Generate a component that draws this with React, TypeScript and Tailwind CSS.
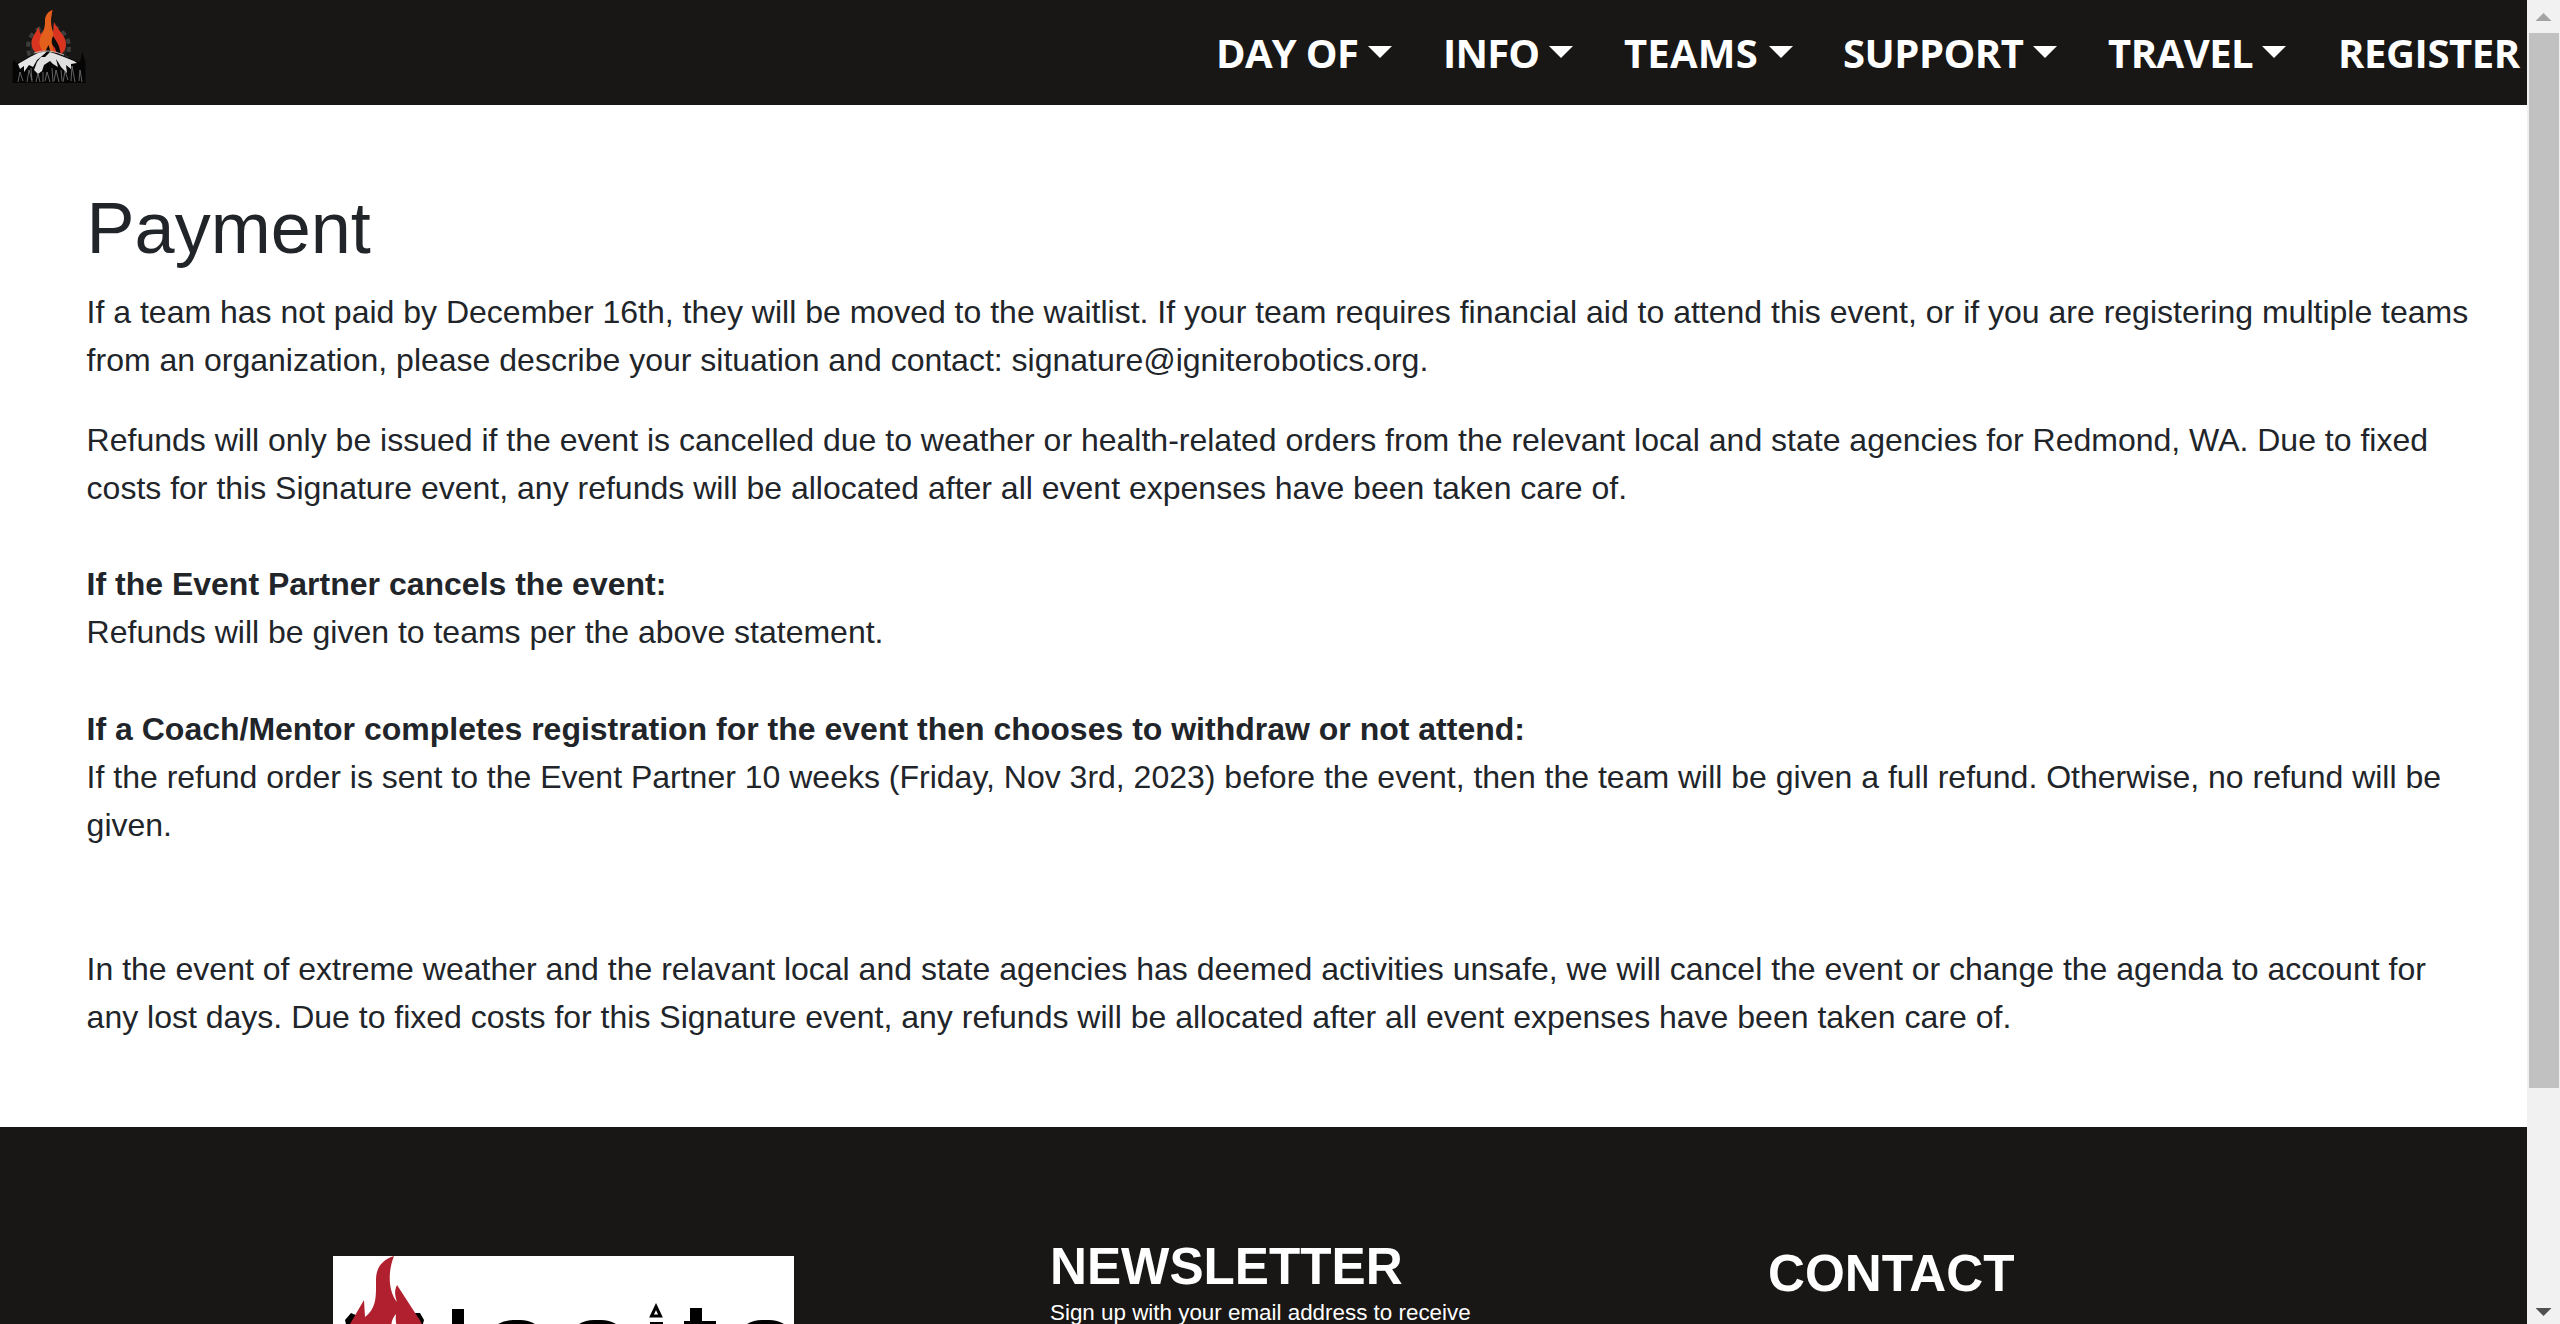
const NAV = [
  { label: "DAY OF", cls: "w-[226px]", text: "-ml-1 mr-1 w-[140px] tracking-[-0.7px]", caret: true },
  { label: "INFO", cls: "w-[179px]", text: "-ml-[3px] mr-[3px] w-[95px] tracking-[-0.8px]", caret: true },
  { label: "TEAMS", cls: "w-[220px]", text: "-ml-px mr-px w-[136px] tracking-[0.2px]", caret: true },
  { label: "SUPPORT", cls: "w-[265px]", text: "-ml-0.5 mr-0.5 w-[180px] tracking-[-0.5px]", caret: true },
  { label: "TRAVEL", cls: "w-[230px]", text: "-ml-0.5 mr-0.5 w-[144px] tracking-[-0.5px]", caret: true },
  { label: "REGISTER", cls: "w-[187px]", text: "-ml-0.5 mr-0.5 w-[181px] tracking-[-0.4px]", caret: false },
];

function CampLogo() {
  return (
    <svg className="ml-3 mt-[9px] h-[74px] w-[74px] shrink-0" viewBox="12 9 74 74">
      <circle cx="48.500" cy="47" r="18" fill="#2b2b2a" />
      <circle cx="48.500" cy="47" r="20.500" fill="none" stroke="#3d3d3c" strokeWidth="4" strokeDasharray="5 4.200" />
      <path d="M52.500 10C47 12 44.500 17 45 23C45.500 29 43 32 40.500 34L38.500 27C36 33 31.500 37 31.500 43C31.500 49 35 53 40 55H60C65 52 67.500 46 65 39C63 34 57 28 54 22C53 27 54 30 53 32C50 24 51 16 52.500 10Z" fill="#d9341f" />
      <path d="M52.500 10C47 12 44.500 17 45 23C45.500 31 39 36 39.500 43C40 49 43 51 46 53L54 52C50 43 55 36 52.500 31C50 23 51 16 52.500 10Z" fill="#e3601c" />
      <path d="M53 36C50.500 42 52 45 55 48L57 54H60.500C60 46 57 42 53 36ZM48.500 45L44.500 53H51Z" fill="#0b0b0b" />
      <path d="M12.500 83V64L14 59L16 63L20 62L30 56L40 52L50 51L62 55L74 60L80 62L82.500 52L85.500 62V83Z" fill="#050505" />
      <path d="M18 64L30 57L39 52.500L47 51.500L42 56L37 60L33 67L29 65L24 72L24 66L20 69Z" fill="#e4e4e4" />
      <path d="M45 57L50 52L56 54L64 57L74 61L77 63L71 64L71 69L66 65L67 73L61 67L58 62L56 59L58 67L53 64L50 61L44 65L42 71L38 74L34 70L37 62L41 57Z" fill="#e0e0e0" />
      <path d="M34 53Q48 48 64 55" fill="none" stroke="#d8d8d8" strokeWidth="0.800" />
      <path d="M18 82L20 72L23 81M27 82L29 70L32 80M36 82L38 73L40 82M45 81L47 72L50 82M54 81L56 70L59 82M63 82L65 71L68 80M71 81L72 66L75 82M79 81L80 70L82 82M31 68L32 82M43 72L43 82M52 68L53 82M61 70L62 81" fill="none" stroke="#8a8a8a" strokeWidth="0.700" />
    </svg>
  );
}

export default function App() {
  return (
    <div className="flex h-[1324px] w-[2560px] overflow-hidden bg-white font-['Liberation_Sans',Arial,sans-serif]">
      <div className="flex h-full w-[2527px] shrink-0 flex-col overflow-hidden">
        <header className="flex h-[105px] shrink-0 justify-between bg-[#181715]">
          <CampLogo />
          <nav className="flex pt-[23px] font-['Open_Sans','Noto_Sans',sans-serif] text-[40px] leading-[60px] font-bold text-white">
            {NAV.map((n) => (
              <div key={n.label} className={`flex shrink-0 whitespace-nowrap ${n.cls}`}>
                <span className={`shrink-0 ${n.text}`}>{n.label}</span>
                {n.caret && <span className="mt-[23px] ml-2 h-3 w-6 bg-white [clip-path:polygon(0_0,100%_0,50%_100%)]" />}
              </div>
            ))}
          </nav>
        </header>

        <main className="h-[1022px] shrink-0 pt-20 pl-[86.6px] text-[32px] leading-[48px] whitespace-nowrap text-[#212529]">
          <h1 className="mb-[17px] text-[72px] leading-[86px]">Payment</h1>
          <p className="mb-8">
            If a team has not paid by December 16th, they will be moved to the waitlist. If your team requires financial aid to attend this event, or if you are registering multiple teams<br />
            from an organization, please describe your situation and contact: signature@igniterobotics.org.
          </p>
          <p>
            Refunds will only be issued if the event is cancelled due to weather or health-related orders from the relevant local and state agencies for Redmond, WA. Due to fixed<br />
            costs for this Signature event, any refunds will be allocated after all event expenses have been taken care of.<br />
            <br />
            <b>If the Event Partner cancels the event:</b><br />
            Refunds will be given to teams per the above statement.
          </p>
          <p className="mt-[49px]">
            <b>If a Coach/Mentor completes registration for the event then chooses to withdraw or not attend:</b><br />
            If the refund order is sent to the Event Partner 10 weeks (Friday, Nov 3rd, 2023) before the event, then the team will be given a full refund. Otherwise, no refund will be<br />
            given.<br />
            <br />
            <br />
            In the event of extreme weather and the relavant local and state agencies has deemed activities unsafe, we will cancel the event or change the agenda to account for<br />
            any lost days. Due to fixed costs for this Signature event, any refunds will be allocated after all event expenses have been taken care of.
          </p>
        </main>

        <footer className="flex h-[197px] shrink-0 overflow-hidden bg-[#181715] pl-[333px] text-white">
          <div className="mt-[129px] h-[68px] w-[461px] shrink-0 overflow-hidden bg-white">
            <svg className="h-[120px] w-[461px]" viewBox="0 0 461 120">
              <path d="M12 64L18 57L30 62V90H18Z M82 57L87 57L91 64L84 90H70Z" />
              <path d="M61 0C48 4 43 13 43 24C43 40 44 52 32 61L31 44L17 68L14 76V100H92V76L88 66L64 29C61 35 62 40 64 46C56 36 54 18 61 0Z" fill="#b1202f" />
              <path d="M63 58C58 64 57 70 60 80H67C64 73 62 66 63 58Z" fill="#fff" />
              <path d="M119 53H131V110H119ZM357 52H369V65H383V75H369V110H357V75H351V65H357ZM317 66H330V110H317Z" />
              <path d="M323 50.500L327.500 60H318.500Z" fill="none" stroke="#000" strokeWidth="3" />
              <g fill="none" stroke="#000" strokeWidth="11">
                <rect x="156" y="69.500" width="55" height="60" rx="24" />
                <rect x="237" y="69.500" width="55" height="60" rx="24" />
                <rect x="405" y="69.500" width="55" height="60" rx="24" />
              </g>
            </svg>
          </div>
          <div className="ml-[256px] w-[718px] shrink-0 pt-[110px]">
            <h2 className="text-[51.2px] leading-[60px] font-bold">NEWSLETTER</h2>
            <p className="text-[22.4px] leading-[31px]">Sign up with your email address to receive</p>
          </div>
          <h2 className="pt-[117px] text-[51.2px] leading-[60px] font-bold">CONTACT</h2>
        </footer>
      </div>

      <div className="flex h-full w-[33px] shrink-0 flex-col items-center bg-[#f1f1f1]">
        <div className="mt-[13px] h-2 w-4 bg-[#a3a3a3] [clip-path:polygon(50%_0,100%_100%,0_100%)]" />
        <div className="mt-3 h-[1055px] w-[30px] bg-[#c1c1c1]" />
        <div className="mt-[220px] h-2 w-4 bg-[#505050] [clip-path:polygon(0_0,100%_0,50%_100%)]" />
      </div>
    </div>
  );
}
